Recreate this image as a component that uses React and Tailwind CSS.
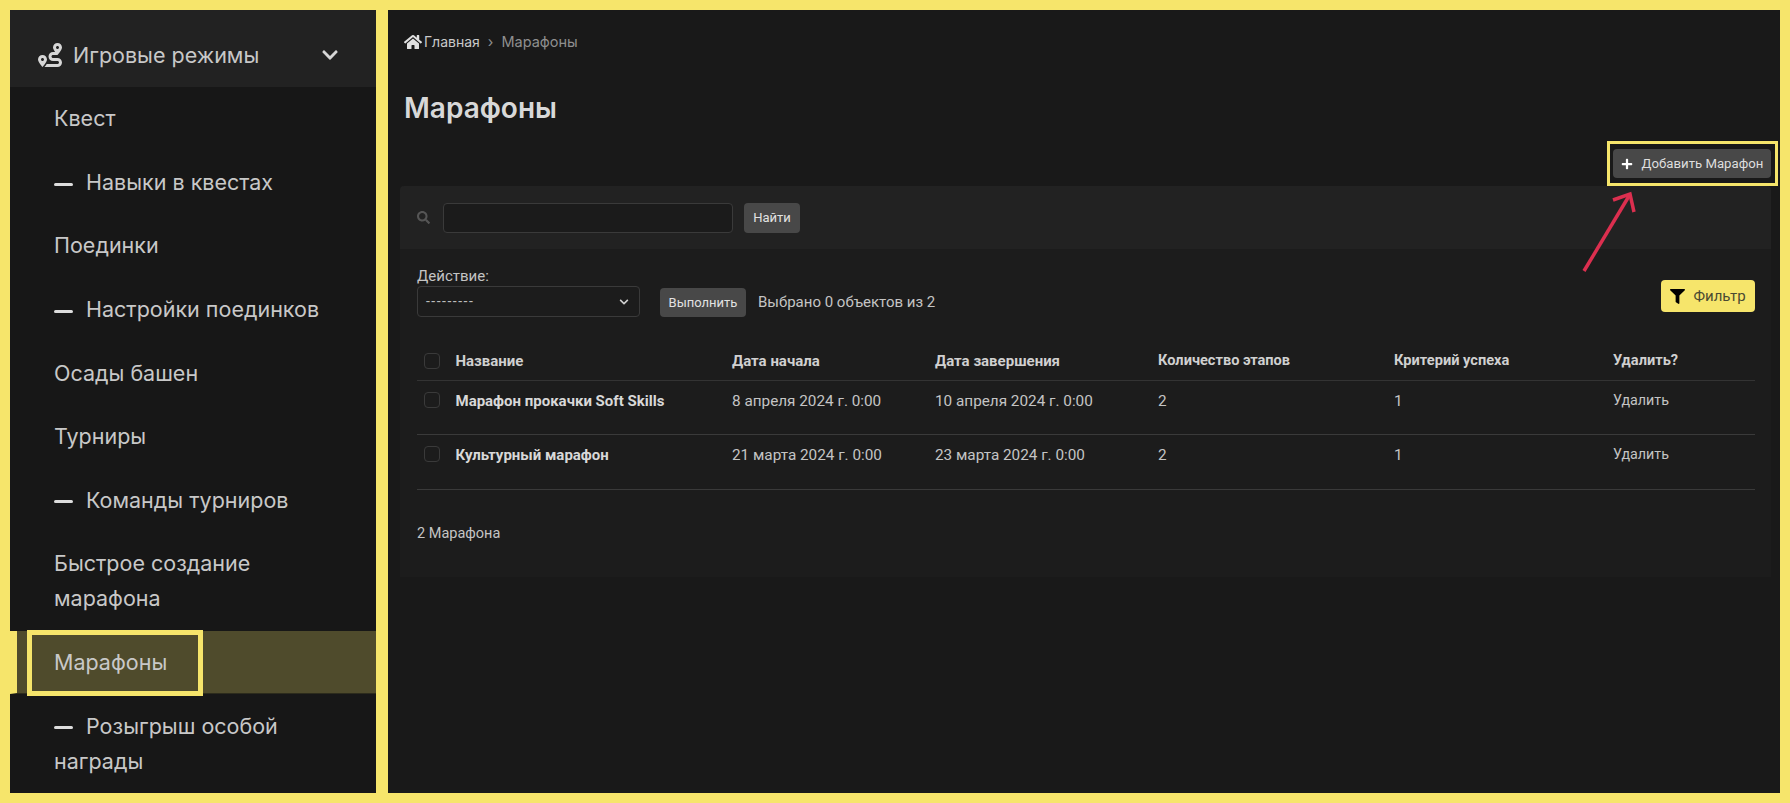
import { FaRoute, FaChevronDown, FaHome, FaSearch, FaFilter, FaPlus } from "react-icons/fa";

const menu = [
  { label: "Квест" },
  { label: "Навыки в квестах", sub: true },
  { label: "Поединки" },
  { label: "Настройки поединков", sub: true },
  { label: "Осады башен" },
  { label: "Турниры" },
  { label: "Команды турниров", sub: true },
  { label: "Быстрое создание марафона" },
  { label: "Марафоны", active: true },
  { label: "Розыгрыш особой награды", sub: true },
];

const rows = [
  { name: "Марафон прокачки Soft Skills", start: "8 апреля 2024 г. 0:00", end: "10 апреля 2024 г. 0:00", stages: "2", crit: "1", h: "h-[54px]" },
  { name: "Культурный марафон", start: "21 марта 2024 г. 0:00", end: "23 марта 2024 г. 0:00", stages: "2", crit: "1", h: "h-[55px]" },
];

const cols = "grid grid-cols-[38.5px_276.5px_203px_223px_236px_219px_1fr]";

function Sidebar() {
  return (
    <aside className="w-[366px] shrink-0 h-full overflow-hidden bg-[#171717] font-['Inter',sans-serif] text-[21.5px] text-[#c8c8c8]">
      {/* заголовок группы */}
      <div className="h-[77px] bg-[#222222] flex items-center pt-[13px] pl-[28px] pr-[37px]">
        <FaRoute className="text-[24px] text-[#d6d6d6] mr-[11px]" />
        <span className="flex-1">Игровые режимы</span>
        <FaChevronDown className="text-[18px] text-[#d6d6d6]" />
      </div>
      {menu.map((item) =>
        item.active ? (
          <div key={item.label} className="relative h-[63.6px] flex items-center pl-[37px] border-l-[7px] border-[#f6e56b] bg-[#4f4b2c] border-b border-b-[#2c2b1c]">
            <span>{item.label}</span>
            <div className="absolute left-[10px] -top-px w-[176px] h-[66px] border-[5px] border-[#f6e56b]"></div>
          </div>
        ) : (
          <div key={item.label} className="pl-[44px] pr-[30px] py-[14.3px] leading-[35px]">
            {item.sub && <span className="inline-block w-[19px] h-[3px] rounded-sm bg-[#dddddd] align-middle mr-[13px]"></span>}
            {item.label}
          </div>
        )
      )}
    </aside>
  );
}

export default function App() {
  return (
    <div className="relative w-full h-[803px] bg-[#f6e56b] p-[10px] flex gap-[12px] overflow-hidden">
      <Sidebar />
      <main className="flex-1 h-full bg-[#191919] pl-[12px] pr-[9px] font-['Roboto',sans-serif] text-[#cfcfcf]">
        <div className="h-[63px] pl-[4px] flex items-center text-[14.5px] font-['Inter',sans-serif]">
          <FaHome className="text-[18px] text-[#e0e0e0] mr-[2px]" />
          <span className="text-[14px] text-[#c9c9c9]">Главная</span>
          <span className="mx-[8px] text-[#8f8f8f]">›</span>
          <span className="text-[#8f8f8f]">Марафоны</span>
        </div>
        <h1 className="pl-[4px] h-[48px] leading-[48px] mt-[11px] text-[28px] font-semibold font-['Inter',sans-serif] text-[#d8d8d8]">Марафоны</h1>
        <div className="h-[54px] flex justify-end items-start pt-[17px]">
          <button className="h-[29px] w-[158px] rounded-[4px] bg-[#484848] flex items-center justify-center gap-[9px] text-[13.2px] text-[#dedede]">
            <FaPlus className="text-[12px] text-white" />
            Добавить Марафон
          </button>
        </div>

        <section className="bg-[#1c1c1c] h-[391px] rounded-t-[4px]">
          <div className="h-[63px] bg-[#222222] rounded-t-[4px] pl-[17px] flex items-center">
            <FaSearch className="text-[13px] text-[#555555] mr-[13px]" />
            <input className="w-[290px] h-[30px] rounded-[4px] bg-[#1b1b1b] border border-[#3a3a3a] outline-none" />
            <button className="ml-[11px] w-[56px] h-[30px] rounded-[4px] bg-[#484848] text-[13px] text-[#e2e2e2]">Найти</button>
          </div>

          <div className="pl-[17px] pr-[16px]">
            <div className="flex items-start justify-between pt-[18px]">
              <div>
                <div className="text-[15px] leading-[18px] text-[#c4c4c4] mb-[1px]">Действие:</div>
                <div className="flex items-center">
                  <div className="w-[223px] h-[31px] rounded-[4px] border border-[#3a3a3a] flex items-center justify-between pl-[8px] pr-[10px] text-[14px] text-[#bcbcbc]">
                    <span className="tracking-[1.5px]">---------</span>
                    <FaChevronDown className="text-[10px] text-[#cfcfcf]" />
                  </div>
                  <button className="ml-[20px] mt-[2px] w-[86px] h-[29px] rounded-[4px] bg-[#484848] text-[13px] text-[#e2e2e2]">Выполнить</button>
                  <span className="ml-[12px] mt-[1px] text-[15px] text-[#c4c4c4]">Выбрано 0 объектов из 2</span>
                </div>
              </div>
              <button className="mt-[13px] w-[94px] h-[32px] rounded-[4px] bg-[#f6e56b] flex items-center justify-center gap-[8px] text-[15px] text-[#4a4a32]">
                <FaFilter className="text-[15px] text-black" />
                Фильтр
              </button>
            </div>

            <div className={`${cols} mt-[25px] h-[39px] items-center border-b border-[#333333] text-[15px] font-bold text-[#d0d0d0]`}>
              <span className="ml-[7px] w-[16px] h-[16px] rounded-[4px] border border-[#3a3a3a]"></span>
              <span>Название</span>
              <span>Дата начала</span>
              <span>Дата завершения</span>
              <span className="text-[14.6px]">Количество этапов</span>
              <span className="text-[14.6px]">Критерий успеха</span>
              <span className="text-[14.6px]">Удалить?</span>
            </div>
            {rows.map((r) => (
              <div key={r.name} className={`${cols} ${r.h} pt-[9px] border-b border-[#3a3a3a] text-[15.3px] text-[#c4c4c4]`}>
                <span className="ml-[7px] mt-[2px] w-[16px] h-[16px] rounded-[4px] border border-[#3a3a3a]"></span>
                <span className="font-bold text-[15px] text-[#d8d8d8]">{r.name}</span>
                <span>{r.start}</span>
                <span>{r.end}</span>
                <span>{r.stages}</span>
                <span>{r.crit}</span>
                <span className="text-[14.3px]">Удалить</span>
              </div>
            ))}
            <div className="mt-[33px] text-[14.5px] text-[#c4c4c4]">2 Марафона</div>
          </div>
        </section>
      </main>

      {/* пометки поверх скриншота */}
      <div className="absolute left-[1607px] top-[141px] w-[171px] h-[45px] border-[3px] border-[#f6e56b]"></div>
      <svg className="absolute left-[1570px] top-[185px]" width="80" height="100" viewBox="0 0 80 100" fill="none" stroke="#dc2f4f" strokeWidth="3.5">
        <path d="M14 86 L59 11" />
        <path d="M43 15 L60 9 L64 27" />
      </svg>
    </div>
  );
}
